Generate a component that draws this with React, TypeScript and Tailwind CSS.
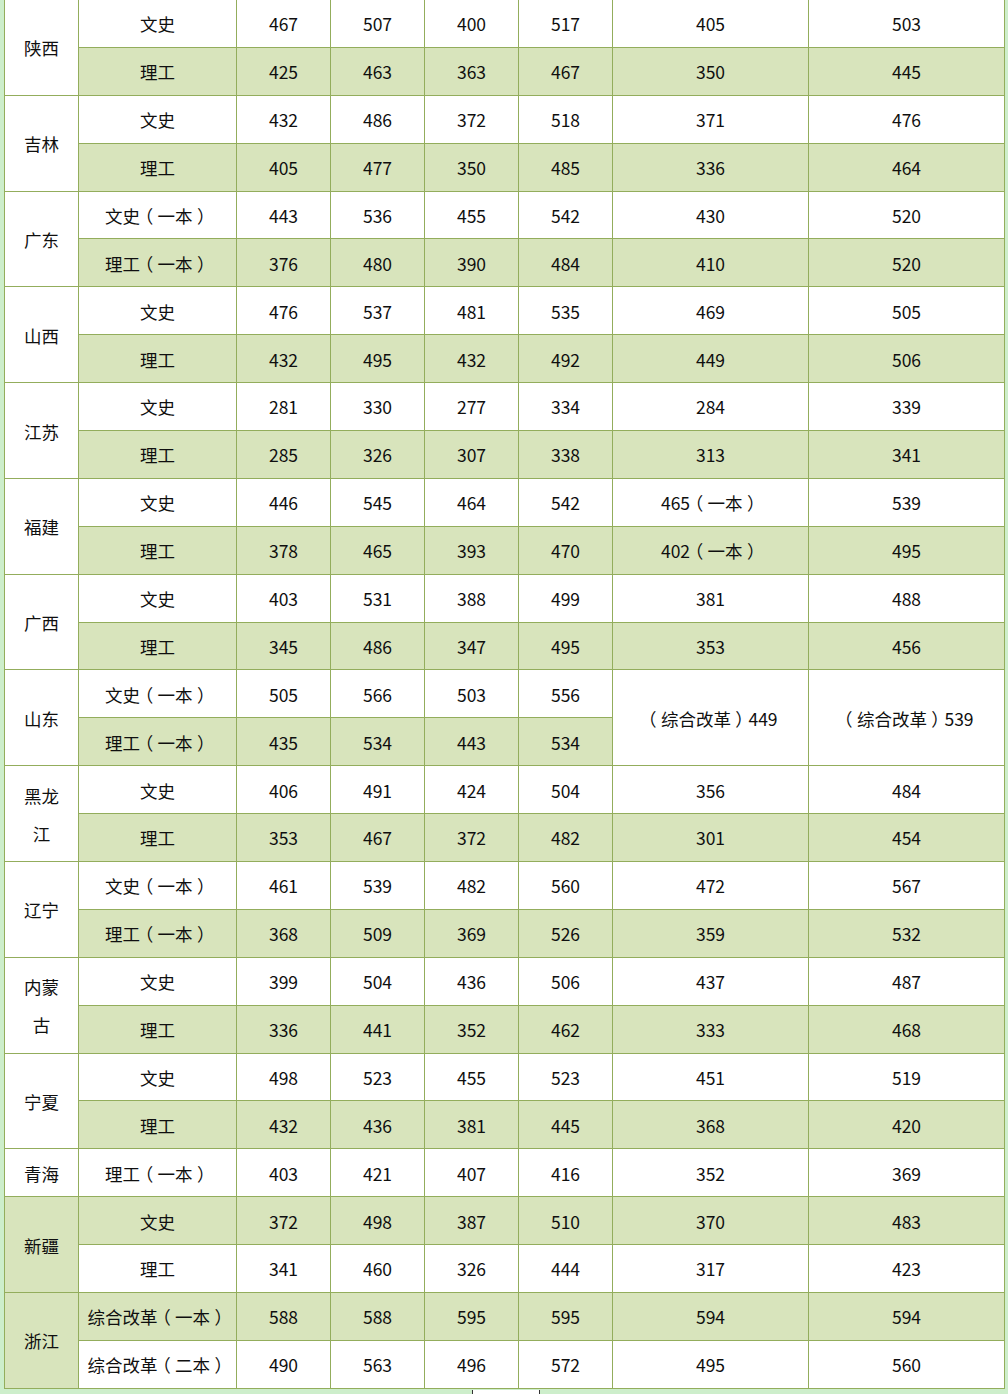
import React from "react";

type Row = { type: string; nums: string[]; merged?: string[] };
type Province = { name: string[]; rows: Row[] };

const data: Province[] = [
  { name: ["陕西"], rows: [
    { type: "文史", nums: ["467", "507", "400", "517", "405", "503"] },
    { type: "理工", nums: ["425", "463", "363", "467", "350", "445"] },
  ] },
  { name: ["吉林"], rows: [
    { type: "文史", nums: ["432", "486", "372", "518", "371", "476"] },
    { type: "理工", nums: ["405", "477", "350", "485", "336", "464"] },
  ] },
  { name: ["广东"], rows: [
    { type: "文史（一本）", nums: ["443", "536", "455", "542", "430", "520"] },
    { type: "理工（一本）", nums: ["376", "480", "390", "484", "410", "520"] },
  ] },
  { name: ["山西"], rows: [
    { type: "文史", nums: ["476", "537", "481", "535", "469", "505"] },
    { type: "理工", nums: ["432", "495", "432", "492", "449", "506"] },
  ] },
  { name: ["江苏"], rows: [
    { type: "文史", nums: ["281", "330", "277", "334", "284", "339"] },
    { type: "理工", nums: ["285", "326", "307", "338", "313", "341"] },
  ] },
  { name: ["福建"], rows: [
    { type: "文史", nums: ["446", "545", "464", "542", "465（一本）", "539"] },
    { type: "理工", nums: ["378", "465", "393", "470", "402（一本）", "495"] },
  ] },
  { name: ["广西"], rows: [
    { type: "文史", nums: ["403", "531", "388", "499", "381", "488"] },
    { type: "理工", nums: ["345", "486", "347", "495", "353", "456"] },
  ] },
  { name: ["山东"], rows: [
    { type: "文史（一本）", nums: ["505", "566", "503", "556"], merged: ["（综合改革）449", "（综合改革）539"] },
    { type: "理工（一本）", nums: ["435", "534", "443", "534"] },
  ] },
  { name: ["黑龙", "江"], rows: [
    { type: "文史", nums: ["406", "491", "424", "504", "356", "484"] },
    { type: "理工", nums: ["353", "467", "372", "482", "301", "454"] },
  ] },
  { name: ["辽宁"], rows: [
    { type: "文史（一本）", nums: ["461", "539", "482", "560", "472", "567"] },
    { type: "理工（一本）", nums: ["368", "509", "369", "526", "359", "532"] },
  ] },
  { name: ["内蒙", "古"], rows: [
    { type: "文史", nums: ["399", "504", "436", "506", "437", "487"] },
    { type: "理工", nums: ["336", "441", "352", "462", "333", "468"] },
  ] },
  { name: ["宁夏"], rows: [
    { type: "文史", nums: ["498", "523", "455", "523", "451", "519"] },
    { type: "理工", nums: ["432", "436", "381", "445", "368", "420"] },
  ] },
  { name: ["青海"], rows: [
    { type: "理工（一本）", nums: ["403", "421", "407", "416", "352", "369"] },
  ] },
  { name: ["新疆"], rows: [
    { type: "文史", nums: ["372", "498", "387", "510", "370", "483"] },
    { type: "理工", nums: ["341", "460", "326", "444", "317", "423"] },
  ] },
  { name: ["浙江"], rows: [
    { type: "综合改革（一本）", nums: ["588", "588", "595", "595", "594", "594"] },
    { type: "综合改革（二本）", nums: ["490", "563", "496", "572", "495", "560"] },
  ] },
];

const cell = "flex items-center justify-center pt-[2px] border-r border-b border-[#93ad5c] whitespace-nowrap";

// centre the full-width parens in their box, the way the source font draws them
function Txt({ s }: { s: string }) {
  const parts = s.split(/([（）])/).filter(Boolean);
  return (
    <>
      {parts.map((p, i) =>
        p === "（" || p === "）" ? (
          <span key={i} className="inline-block px-[0.25em] [font-feature-settings:'halt']">
            {p}
          </span>
        ) : (
          <span key={i}>{p}</span>
        )
      )}
    </>
  );
}

export default function App() {
  const cells: React.ReactNode[] = [];
  let idx = 0;
  data.forEach((p, pi) => {
    const startGreen = idx % 2 === 1;
    const span = p.rows.length === 2 ? "row-span-2" : "";
    cells.push(
      <div
        key={`p${pi}`}
        className={`${cell} ${span} flex-col leading-[38px] ${startGreen ? "bg-[#d8e4bc]" : "bg-white"}`}
      >
        {p.name.map((n) => (
          <span key={n}>{n}</span>
        ))}
      </div>
    );
    p.rows.forEach((r, ri) => {
      const bg = idx % 2 === 1 ? "bg-[#d8e4bc]" : "bg-white";
      cells.push(
        <div key={`t${pi}-${ri}`} className={`${cell} ${bg}`}>
          <Txt s={r.type} />
        </div>
      );
      r.nums.forEach((n, ni) => {
        cells.push(
          <div key={`n${pi}-${ri}-${ni}`} className={`${cell} ${bg}`}>
            <Txt s={n} />
          </div>
        );
      });
      r.merged?.forEach((m, mi) => {
        cells.push(
          <div key={`m${pi}-${mi}`} className={`${cell} row-span-2 bg-white`}>
            <Txt s={m} />
          </div>
        );
      });
      idx++;
    });
  });

  return (
    <div className="w-[1008px] h-[1394px] bg-[#cdeecb] overflow-hidden relative">
      <div
        className="ml-[4px] grid grid-cols-[74px_158px_94px_94px_94px_94px_196px_196px] grid-rows-[repeat(29,47.9px)] border-l border-[#93ad5c] text-[17.5px] text-[#0f0f0f]"
        style={{ fontFamily: '"Noto Sans CJK SC", "Noto Sans", sans-serif' }}
      >
        {cells}
      </div>
      <div className="absolute left-[472px] top-[1390px] w-[68px] h-[6px] bg-white border-l border-r border-[#333]" />
    </div>
  );
}
